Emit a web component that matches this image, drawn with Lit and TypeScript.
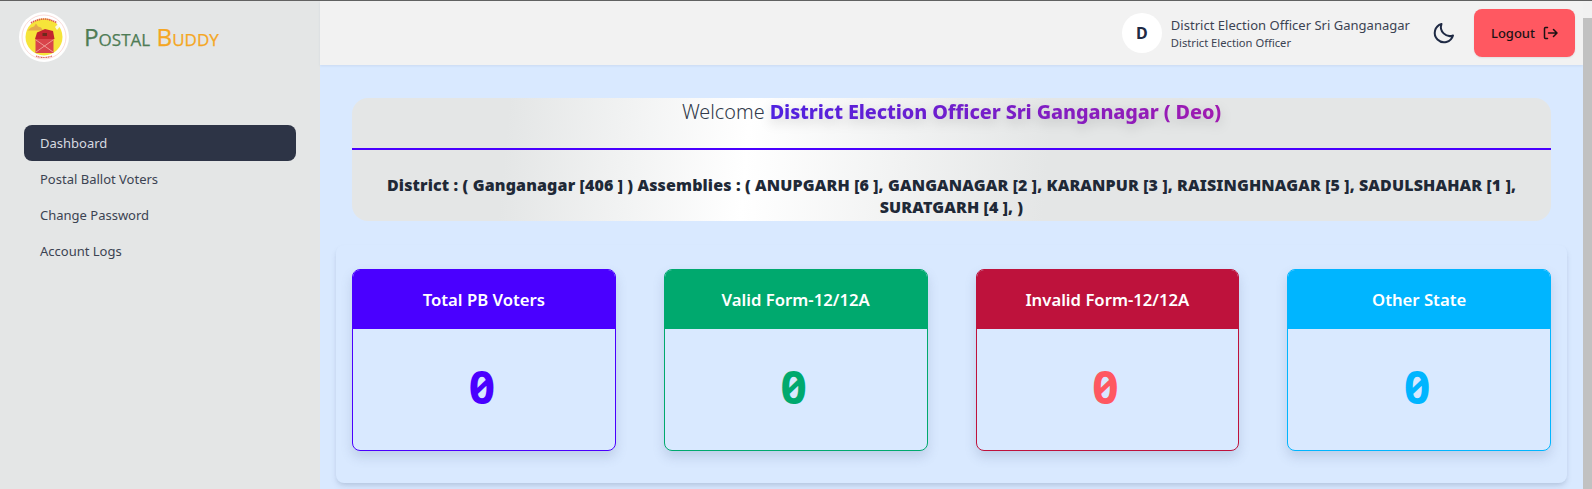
import { LitElement, html, css, svg } from "lit";
import { customElement } from "lit/decorators.js";

const stats = [
  { title: "Total PB Voters", cls: "blue" },
  { title: "Valid Form-12/12A", cls: "green" },
  { title: "Invalid Form-12/12A", cls: "red" },
  { title: "Other State", cls: "cyan" },
];
const nav = ["Dashboard", "Postal Ballot Voters", "Change Password", "Account Logs"];

const logo = svg`<svg class="logo" viewBox="0 0 50 50" width="50" height="50">
  <circle cx="25" cy="25" r="25" fill="#fff"/>
  <circle cx="25" cy="25" r="22" fill="none" stroke="#f3b6b0" stroke-width=".5"/>
  <circle cx="25" cy="25" r="18.5" fill="#f6e43a"/>
  <path d="M8.500 18.500H24l-2-3-3-1-2-3-2 3-3 1z" fill="#e5a94a"/>
  <path d="M36 15l4-4 1.500 3-3.500 4z" fill="#fff" opacity=".85"/>
  <path d="M16 27l2-6.500 8-3.500 8 2 1.500 8z" fill="#c3242f"/>
  <rect x="16.500" y="27" width="18" height="14" fill="#d9444b"/>
  <path d="M17 28l17 12M34 28L17 40" stroke="#f2b1a8" stroke-width=".8"/>
  <rect x="23.500" y="21" width="4.500" height="3" fill="#6d2a1c"/>
  <path d="M12 11q13-8 26 0" fill="none" stroke="#dc5a55" stroke-width="1.700" stroke-dasharray="1.400 .7"/>
  <path d="M17 44q8 3 16 0" fill="none" stroke="#dc5a55" stroke-width="1.200" stroke-dasharray="1.200 .5"/>
</svg>`;

@customElement("app-root")
export class AppRoot extends LitElement {
  static styles = css`
    :host {
      display: block;
      height: 489px;
      overflow: hidden;
      font-family: "Noto Sans", "Open Sans", sans-serif;
      background: #d9e9ff;
      color: #1f2937;
    }
    .topline { height: 1px; background: #626262; }
    .frame { display: flex; height: 488px; }
    .side { width: 320px; flex: none; background: #e4e6e6; }
    .brand { display: flex; align-items: center; gap: 15px; height: 72px; padding-left: 19px; box-sizing: border-box; }
    .brand-name {
      font-family: "Open Sans", sans-serif;
      font-variant: small-caps;
      font-size: 24.300px;
      line-height: 30px;
      color: #4e7c55;
      -webkit-text-stroke: 0.25px currentColor;
    }
    .brand-name b { font-weight: 400; color: #f5a623; }
    .logo { display: block; }
    .menu { display: flex; flex-direction: column; padding: 52px 24px 0; }
    .menu a {
      height: 36px;
      display: flex;
      align-items: center;
      padding-left: 16px;
      font-size: 13px;
      color: #3b4352;
      border-radius: 8px;
    }
    .menu a.on { background: #2d3446; color: #d7dae0; }
    .body { flex: 1; min-width: 0; display: flex; flex-direction: column; }
    .head {
      height: 64px;
      flex: none;
      background: #f2f2f2;
      box-shadow: 0 1px 2px rgba(100, 120, 160, 0.12);
      display: flex;
      align-items: center;
      justify-content: flex-end;
      padding-right: 8px;
    }
    .avatar {
      width: 40px; height: 40px; border-radius: 50%;
      background: #fff; display: flex; align-items: center; justify-content: center;
      font-weight: 700; font-size: 16px; color: #1f2a44;
      margin-right: 9px;
    }
    .who { display: flex; flex-direction: column; color: #3b4352; margin-right: 22px; }
    .who .n { font-size: 13px; line-height: 18px; letter-spacing: 0.02px; }
    .who .r { font-size: 11.200px; line-height: 16px; margin-top: 1px; }
    .moon { display: block; margin-right: 18px; color: #1f2a44; }
    .logout {
      width: 101px; height: 48px; border-radius: 8px; background: #ff5861;
      display: flex; align-items: center; justify-content: center; gap: 7px;
      font-size: 13px; font-weight: 500; color: #1b1214;
      box-shadow: 0 1px 2px rgba(0,0,0,.08);
    }
    .main { flex: 1; padding: 33px 16px 0; min-height: 0; }
    .welcome {
      margin: 0 16px;
      height: 123px;
      border-radius: 16px;
      overflow: hidden;
      background: linear-gradient(95deg, #e4e6e6 13%, #ffffff 33%, #e4e6e6 58%);
      display: flex; flex-direction: column; align-items: stretch;
      text-align: center;
    }
    .hello { height: 50px; flex: none; font-size: 19.800px; line-height: 28px; font-weight: 300; color: #323b4b; }
    .hello b {
      font-weight: 800;
      letter-spacing: -0.1px;
      background: linear-gradient(90deg, #4f22e0, #a01ab0);
      -webkit-background-clip: text;
      background-clip: text;
      color: transparent;
      filter: drop-shadow(0 4px 6px rgba(0,0,0,.16));
    }
    .rule { height: 2px; flex: none; background: #4a00ff; }
    .dist {
      padding: 25px 24px 0;
      font-size: 16px; line-height: 21.500px; font-weight: 900; color: #1f2937;
      letter-spacing: 0.13px;
    }
    .panel {
      margin-top: 24px;
      height: 238px;
      box-sizing: border-box;
      border-radius: 8px;
      padding: 24px 16px 0;
      display: grid;
      grid-template-columns: repeat(4, 1fr);
      column-gap: 48px;
      background: #d9e9ff;
      box-shadow: 0 4px 6px -1px rgba(60, 80, 120, .16), 0 2px 4px -2px rgba(60, 80, 120, .16);
      align-content: start;
    }
    .card {
      --c: #4a00ff;
      height: 182px;
      border: 1px solid var(--c);
      border-radius: 8px;
      box-sizing: border-box;
      overflow: hidden;
      box-shadow: 0 6px 12px rgba(80, 100, 140, 0.2);
      background: #d9e9ff;
      display: flex; flex-direction: column;
    }
    .card.green { --c: #00a96e; }
    .card.red { --c: #be123c; --n: #ff5861; }
    .card.cyan { --c: #00b5ff; }
    .card h3 {
      margin: 0; height: 59px; flex: none;
      background: var(--c); color: #fff;
      display: flex; align-items: center; justify-content: center;
      font-size: 16.700px; font-weight: 600;
    }
    .card .num {
      flex: 1; display: flex; align-items: center; justify-content: center;
      font-family: "Noto Sans", sans-serif;
      font-variant-numeric: slashed-zero;
      font-feature-settings: "zero" 1;
      font-weight: 700; font-size: 46px;
      color: var(--n, var(--c));
      padding-bottom: 7px; padding-right: 4px;
    }
    .bar { width: 9px; flex: none; background: #f1f1f1; display: flex; flex-direction: column; }
    .bar i { display: block; height: 17px; }
    .bar s { display: block; flex: 1; background: #c1c1c1; }
  `;

  render() {
    return html`
      <div class="topline"></div>
      <div class="frame">
        <aside class="side">
          <div class="brand">${logo}<span class="brand-name">Postal <b>Buddy</b></span></div>
          <nav class="menu">
            ${nav.map((n, i) => html`<a class=${i === 0 ? "on" : ""}>${n}</a>`)}
          </nav>
        </aside>
        <div class="body">
          <header class="head">
            <div class="avatar">D</div>
            <div class="who">
              <span class="n">District Election Officer Sri Ganganagar</span>
              <span class="r">District Election Officer</span>
            </div>
            <svg class="moon" width="24" height="24" viewBox="0 0 24 24" fill="none" stroke="currentColor" stroke-width="2" stroke-linecap="round" stroke-linejoin="round">
              <path d="M21 14.500A9 9 0 0 1 9.500 3 9.300 9.300 0 1 0 21 14.500z" />
            </svg>
            <div class="logout">
              <span>Logout</span>
              <svg width="16" height="16" viewBox="0 0 16 16" fill="none" stroke="currentColor" stroke-width="1.500" stroke-linecap="round" stroke-linejoin="round">
                <path d="M5.500 2.500H3.500a1 1 0 0 0-1 1v9a1 1 0 0 0 1 1h2M6.500 8h8M11.500 4.500L15 8l-3.500 3.500" />
              </svg>
            </div>
          </header>
          <main class="main">
            <section class="welcome">
              <div class="hello">Welcome <b>District Election Officer Sri Ganganagar ( Deo)</b></div>
              <div class="rule"></div>
              <div class="dist">District : ( Ganganagar [406 ] ) Assemblies : ( ANUPGARH [6 ], GANGANAGAR [2 ], KARANPUR [3 ], RAISINGHNAGAR [5 ], SADULSHAHAR [1 ], SURATGARH [4 ], )</div>
            </section>
            <section class="panel">
              ${stats.map(s => html`<article class="card ${s.cls}"><h3>${s.title}</h3><div class="num">0</div></article>`)}
            </section>
          </main>
        </div>
        <div class="bar"><i></i><s></s></div>
      </div>
    `;
  }
}
